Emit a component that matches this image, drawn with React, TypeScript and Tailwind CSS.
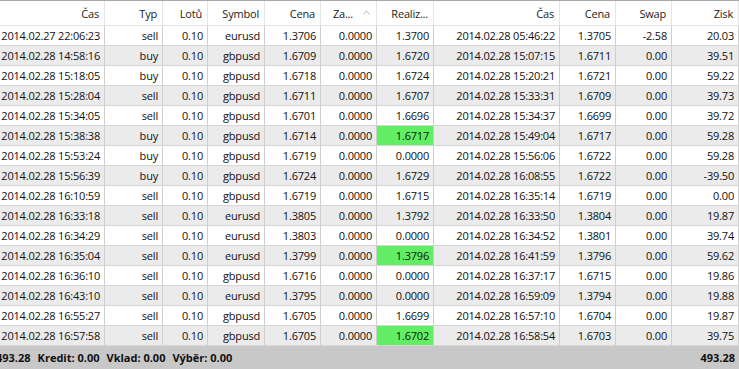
const cols = [
  'w-[105px]',
  'w-[58px]',
  'w-[45px]',
  'w-[57px]',
  'w-[56px]',
  'w-[56px]',
  'w-[57px]',
  'w-[126px]',
  'w-[56px]',
  'w-[56px]',
  'w-[67px]',
]

const headers = ['Čas', 'Typ', 'Lotů', 'Symbol', 'Cena', 'Za...', 'Realiz...', 'Čas', 'Cena', 'Swap', 'Zisk']

// open time, type, symbol, open price, realized, close time, close price, swap, profit, green
const trades: [string, string, string, string, string, string, string, string, string, boolean][] = [
  ['2014.02.27 22:06:23', 'sell', 'eurusd', '1.3706', '1.3700', '2014.02.28 05:46:22', '1.3705', '-2.58', '20.03', false],
  ['2014.02.28 14:58:16', 'buy', 'gbpusd', '1.6709', '1.6720', '2014.02.28 15:07:15', '1.6711', '0.00', '39.51', false],
  ['2014.02.28 15:18:05', 'buy', 'gbpusd', '1.6718', '1.6724', '2014.02.28 15:20:21', '1.6721', '0.00', '59.22', false],
  ['2014.02.28 15:28:04', 'sell', 'gbpusd', '1.6711', '1.6707', '2014.02.28 15:33:31', '1.6709', '0.00', '39.73', false],
  ['2014.02.28 15:34:05', 'sell', 'gbpusd', '1.6701', '1.6696', '2014.02.28 15:34:37', '1.6699', '0.00', '39.72', false],
  ['2014.02.28 15:38:38', 'buy', 'gbpusd', '1.6714', '1.6717', '2014.02.28 15:49:04', '1.6717', '0.00', '59.28', true],
  ['2014.02.28 15:53:24', 'buy', 'gbpusd', '1.6719', '0.0000', '2014.02.28 15:56:06', '1.6722', '0.00', '59.28', false],
  ['2014.02.28 15:56:39', 'buy', 'gbpusd', '1.6724', '1.6729', '2014.02.28 16:08:55', '1.6722', '0.00', '-39.50', false],
  ['2014.02.28 16:10:59', 'sell', 'gbpusd', '1.6719', '1.6715', '2014.02.28 16:35:14', '1.6719', '0.00', '0.00', false],
  ['2014.02.28 16:33:18', 'sell', 'eurusd', '1.3805', '1.3792', '2014.02.28 16:33:50', '1.3804', '0.00', '19.87', false],
  ['2014.02.28 16:34:29', 'sell', 'eurusd', '1.3803', '0.0000', '2014.02.28 16:34:52', '1.3801', '0.00', '39.74', false],
  ['2014.02.28 16:35:04', 'sell', 'eurusd', '1.3799', '1.3796', '2014.02.28 16:41:59', '1.3796', '0.00', '59.62', true],
  ['2014.02.28 16:36:10', 'sell', 'gbpusd', '1.6716', '0.0000', '2014.02.28 16:37:17', '1.6715', '0.00', '19.86', false],
  ['2014.02.28 16:43:10', 'sell', 'eurusd', '1.3795', '0.0000', '2014.02.28 16:59:09', '1.3794', '0.00', '19.88', false],
  ['2014.02.28 16:55:27', 'sell', 'gbpusd', '1.6705', '1.6699', '2014.02.28 16:57:10', '1.6704', '0.00', '19.87', false],
  ['2014.02.28 16:57:58', 'sell', 'gbpusd', '1.6705', '1.6702', '2014.02.28 16:58:54', '1.6703', '0.00', '39.75', true],
]

const App = () => {
  return (
    <div className="w-[739px] h-[369px] overflow-hidden bg-white text-[11px] text-[#111] font-['Open_Sans',sans-serif] leading-none whitespace-nowrap tracking-[-0.2px]">
      {/* header */}
      <div className="flex h-[26px] border-t border-[#a8a8a8] border-b border-b-[#e3e3e3] bg-white">
        {headers.map((h, i) => (
          <div
            key={i}
            className={`${cols[i]} shrink-0 relative flex items-center justify-end pr-[5px] border-r border-[#e5e5e5] text-[#1b1b1b]`}
          >
            {i === 5 ? (
              <>
                <span className="mr-[18px]">{h}</span>
                <svg className="absolute right-[6px] top-[9px]" width="7" height="5" viewBox="0 0 7 5">
                  <path d="M0.5 4.5 L3.5 0.8 L6.5 4.5" fill="none" stroke="#b8b8b8" strokeWidth="1" />
                </svg>
              </>
            ) : (
              h
            )}
          </div>
        ))}
      </div>

      {/* rows */}
      {trades.map((t, r) => {
        const cells = [t[0], t[1], '0.10', t[2], t[3], '0.0000', t[4], t[5], t[6], t[7], t[8]]
        return (
          <div key={r} className={`flex h-[20px] border-b border-[#d6d6d6] ${r % 2 === 1 ? 'bg-[#ebebeb]' : 'bg-white'}`}>
            {cells.map((c, i) => (
              <div
                key={i}
                className={`${cols[i]} shrink-0 flex items-center justify-end overflow-hidden pr-[4px] border-r border-[#cfcfcf] ${
                  i === 6 && t[9] ? 'bg-[#62ee62]' : ''
                }`}
              >
                {c}
              </div>
            ))}
          </div>
        )
      })}

      {/* footer */}
      <div className="flex items-center justify-between h-[23px] bg-[#c8c8c8] font-bold text-[#111] tracking-normal">
        <div className="flex gap-[7px] -ml-[4px]">
          <span>493.28</span>
          <span>Kredit: 0.00</span>
          <span>Vklad: 0.00</span>
          <span>Výběr: 0.00</span>
        </div>
        <span className="pr-[4px]">493.28</span>
      </div>
    </div>
  )
}

export default App
